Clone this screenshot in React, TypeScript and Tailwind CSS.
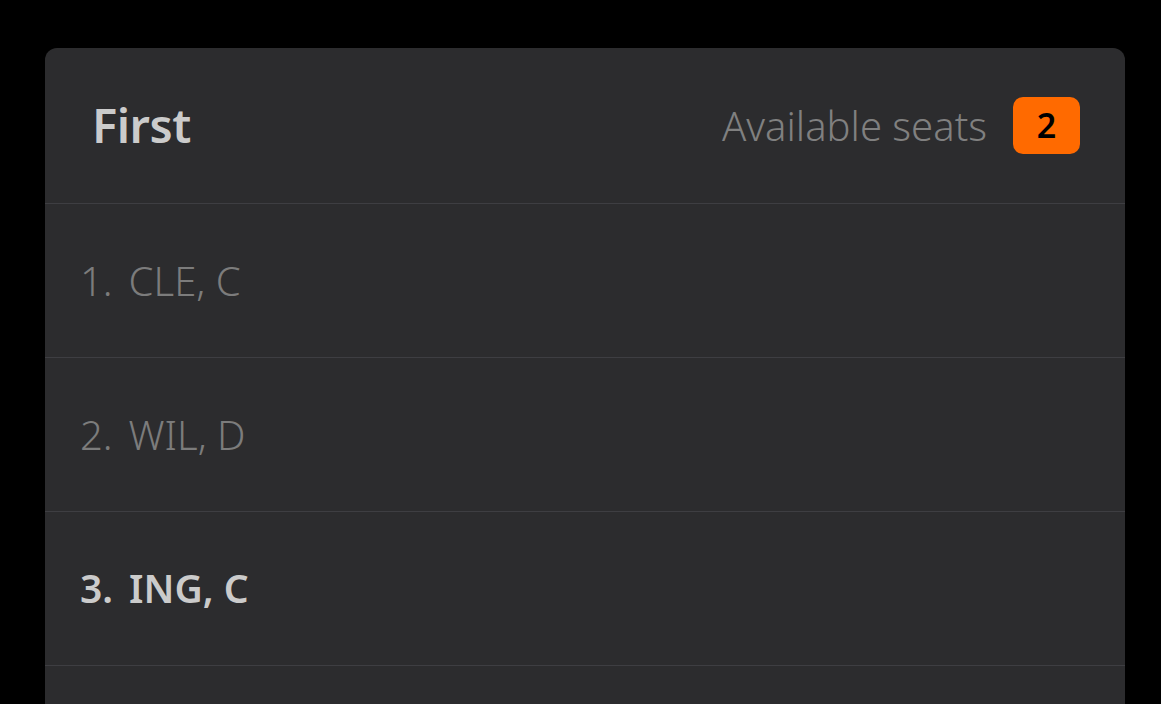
export default function App() {
  const rows = [
    { n: '1.', name: 'CLE, C', active: false },
    { n: '2.', name: 'WIL, D', active: false },
    { n: '3.', name: 'ING, C', active: true },
    { n: '', name: '', active: false },
  ]

  return (
    <div className="h-[704px] w-[1161px] overflow-hidden bg-black pt-[48px] pl-[45px]" style={{ fontFamily: '"Noto Sans", sans-serif' }}>
      <div className="w-[1080px] rounded-t-[12px] bg-[#2c2c2e]">
        <div className="flex h-[156px] items-center justify-between border-b border-[#3e3e42] pl-[47px] pr-[45px]">
          <h1 className="text-[47px] font-semibold tracking-[-0.5px] text-[#cbcbcb]">First</h1>
          <div className="flex items-center gap-[26px]">
            <span className="text-[40px] font-light text-[#808080]">Available seats</span>
            <span className="flex h-[57px] w-[67px] items-center justify-center rounded-[10px] bg-[#ff6a00] text-[34px] font-semibold text-black">
              2
            </span>
          </div>
        </div>
        {rows.map((r, i) => (
          <div
            key={i}
            className="flex h-[154px] items-center border-b border-[#3e3e42] pl-[35px]"
          >
            {r.name && (
              <div
                className={
                  r.active
                    ? 'flex text-[39px] font-semibold text-[#cbcbcb]'
                    : 'flex text-[40px] font-light text-[#7c7c7c]'
                }
              >
                <span>{r.n}</span>
                <span className="ml-[16px]">{r.name}</span>
              </div>
            )}
          </div>
        ))}
      </div>
    </div>
  )
}
